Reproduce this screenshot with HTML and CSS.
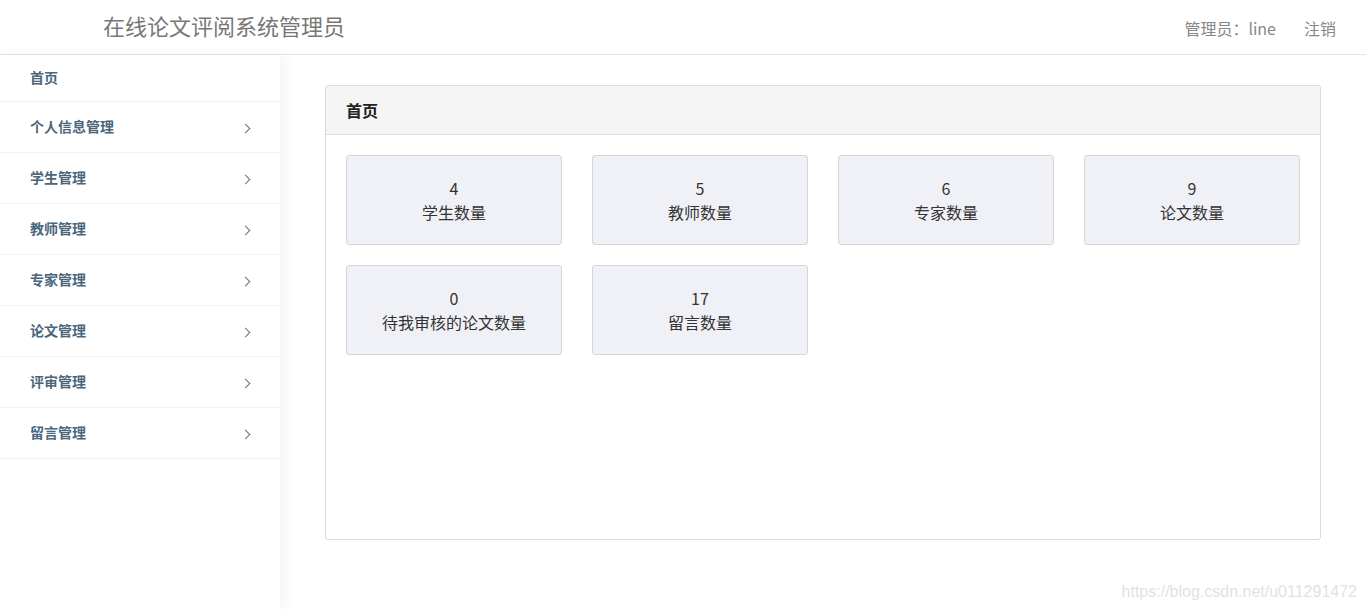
FILE: index.html
```html
<!DOCTYPE html>
<html lang="zh">
<head>
<meta charset="utf-8">
<title>在线论文评阅系统管理员</title>
<link rel="stylesheet" href="styles.css">
</head>
<body>
<header class="topbar">
  <div class="brand">在线论文评阅系统管理员</div>
  <div class="user">
    <span class="user-name">管理员：line</span>
    <a class="logout" href="#">注销</a>
  </div>
</header>
<div class="layout">
  <aside class="sidebar">
    <ul class="menu">
      <li class="menu-item first"><span>首页</span></li>
      <li class="menu-item"><span>个人信息管理</span><i class="chev"></i></li>
      <li class="menu-item"><span>学生管理</span><i class="chev"></i></li>
      <li class="menu-item"><span>教师管理</span><i class="chev"></i></li>
      <li class="menu-item"><span>专家管理</span><i class="chev"></i></li>
      <li class="menu-item"><span>论文管理</span><i class="chev"></i></li>
      <li class="menu-item"><span>评审管理</span><i class="chev"></i></li>
      <li class="menu-item"><span>留言管理</span><i class="chev"></i></li>
    </ul>
  </aside>
  <main class="main">
    <section class="panel">
      <div class="panel-head">首页</div>
      <div class="panel-body">
        <div class="stat"><div>4</div><div>学生数量</div></div>
        <div class="stat"><div>5</div><div>教师数量</div></div>
        <div class="stat"><div>6</div><div>专家数量</div></div>
        <div class="stat"><div>9</div><div>论文数量</div></div>
        <div class="stat"><div>0</div><div>待我审核的论文数量</div></div>
        <div class="stat"><div>17</div><div>留言数量</div></div>
      </div>
    </section>
  </main>
</div>
<div class="watermark">https://blog.csdn.net/u011291472</div>
</body>
</html>
```

FILE: styles.css
```css
* { box-sizing: border-box; }
html, body { margin: 0; padding: 0; height: 100%; }
body {
  font-family: "Noto Sans CJK SC", "Open Sans", sans-serif;
  background: #fff;
  color: #333;
  overflow: hidden;
  position: relative;
}
.topbar {
  height: 55px;
  border-bottom: 1px solid #e5e5e5;
  display: flex;
  align-items: center;
  justify-content: space-between;
  padding: 0 30px 0 103px;
}
.brand {
  font-size: 22px;
  color: #777;
  margin-top: -4px;
}
.user {
  display: flex;
  gap: 28px;
  font-size: 16px;
  color: #888;
  margin-top: 2px;
}
.logout { color: #888; text-decoration: none; }
.layout {
  display: flex;
  height: calc(100% - 55px);
}
.sidebar {
  width: 280px;
  flex: none;
  background: #fff;
  box-shadow: 4px 0 12px rgba(0,0,0,0.05);
  position: relative;
  z-index: 1;
}
.menu { list-style: none; margin: 0; padding: 0; }
.menu-item {
  height: 51px;
  display: flex;
  align-items: center;
  justify-content: space-between;
  padding: 0 31px 0 30px;
  border-bottom: 1px solid #f2f2f2;
  font-size: 14px;
  line-height: 20px;
  font-weight: bold;
  color: #4a667b;
}
.menu-item span { margin-top: -2px; }
.menu-item.first { height: 47px; }
.chev {
  width: 7px;
  height: 7px;
  border-right: 1.3px solid #5c7487;
  border-bottom: 1.3px solid #5c7487;
  transform: rotate(-45deg);
  margin-top: 2px;
}
.main {
  flex: 1;
  padding: 30px 45px 0 45px;
}
.panel {
  border: 1px solid #dcdcdc;
  border-radius: 3px;
  height: 455px;
}
.panel-head {
  height: 49px;
  background: #f5f5f5;
  border-bottom: 1px solid #dcdcdc;
  padding: 0 20px;
  display: flex;
  align-items: center;
  font-size: 16px;
  font-weight: bold;
  color: #222;
}
.panel-body {
  padding: 20px;
  display: grid;
  grid-template-columns: repeat(4, 216px);
  column-gap: 30px;
  row-gap: 20px;
}
.stat {
  height: 90px;
  background: #f0f1f6;
  border: 1px solid #d6d6d9;
  border-radius: 3px;
  display: flex;
  flex-direction: column;
  align-items: center;
  justify-content: center;
  font-size: 16px;
  line-height: 24px;
  color: #333;
}
.watermark {
  position: absolute;
  right: 9px;
  bottom: 8px;
  font-family: "Liberation Sans", Arial, sans-serif;
  font-size: 16px;
  color: #e2e2e2;
}
```
